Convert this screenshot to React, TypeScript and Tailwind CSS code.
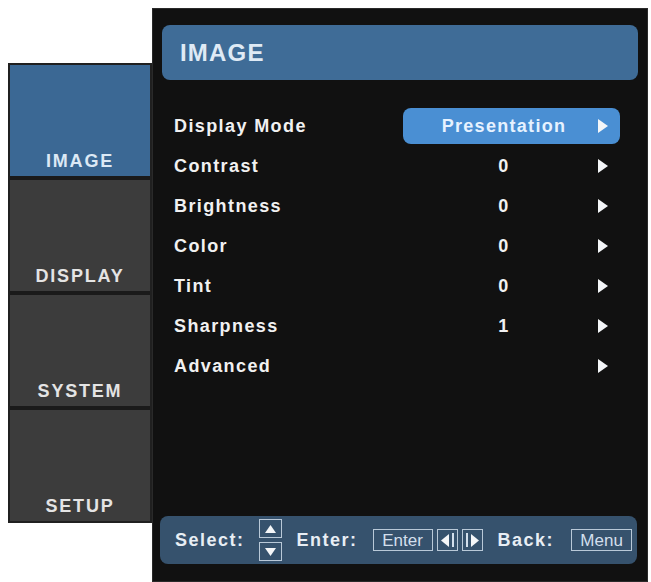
const rows = [
  { label: "Display Mode", value: "Presentation", active: true },
  { label: "Contrast", value: "0" },
  { label: "Brightness", value: "0" },
  { label: "Color", value: "0" },
  { label: "Tint", value: "0" },
  { label: "Sharpness", value: "1" },
  { label: "Advanced", value: "" },
];

const tabs = [
  { name: "IMAGE", active: true },
  { name: "DISPLAY" },
  { name: "SYSTEM" },
  { name: "SETUP" },
];

function Tri({ dir, w = 10, h = 14 }: { dir: "right" | "left" | "up" | "down"; w?: number; h?: number }) {
  const pts =
    dir === "right"
      ? `0,0 ${w},${h / 2} 0,${h}`
      : dir === "left"
      ? `${w},0 0,${h / 2} ${w},${h}`
      : dir === "up"
      ? `0,${h} ${w / 2},0 ${w},${h}`
      : `0,0 ${w / 2},${h} ${w},0`;
  return (
    <svg width={w} height={h} viewBox={`0 0 ${w} ${h}`} className="block">
      <polygon points={pts} fill="#f4f6f8" />
    </svg>
  );
}

function Key({ children, w }: { children: React.ReactNode; w: string }) {
  return (
    <div className={`${w} h-[22px] border-[1.5px] border-[#b9c9d8] flex items-center justify-center text-[17px] leading-none text-[#d3dfec]`}>
      {children}
    </div>
  );
}

export default function App() {
  return (
    <div
      className="w-[651px] h-[582px] bg-white flex items-start pl-[8px] overflow-hidden"
      style={{ fontFamily: '"Liberation Sans", Arial, sans-serif' }}
    >
      {/* left tabs */}
      <div className="mt-[63px] w-[144px] h-[460px] bg-[#1a1a1a] border-2 border-[#202020] flex flex-col gap-[4px]">
        {tabs.map((t) => (
          <div
            key={t.name}
            className={`flex-1 flex flex-col justify-end items-center pb-[5px] ${
              t.active ? "bg-[#3b6894] text-[#dce9f5]" : "bg-[#3c3c3c] text-[#e4e4e4]"
            }`}
          >
            <span className="text-[18px] font-bold tracking-[1.8px] leading-[20px]">{t.name}</span>
          </div>
        ))}
      </div>

      {/* main panel */}
      <div className="mt-[8px] w-[496px] h-[574px] bg-[#111111] border border-[#2a2a2a] flex flex-col">
        <div className="mx-[9px] mt-[16px] h-[55px] rounded-[8px] bg-[#3f6c97] flex items-center pl-[18px]">
          <span className="text-[24px] font-bold tracking-[1.2px] text-[#dfeaf5]">IMAGE</span>
        </div>

        <div className="mt-[26px] flex flex-col">
          {rows.map((r) => (
            <div key={r.label} className="h-[40px] flex items-center pl-[21px]">
              <span className="flex-1 text-[18px] font-bold tracking-[1.4px] text-[#f1f1f1]">{r.label}</span>
              <div
                className={`w-[217px] h-[36px] mr-[27px] flex items-center pl-[21px] ${
                  r.active ? "bg-[#4a8fd3] rounded-[8px]" : ""
                }`}
              >
                <span
                  className={`w-[160px] text-center text-[18px] font-bold tracking-[1.3px] ${
                    r.active ? "text-[#e6f2ff]" : "text-[#f1f1f1]"
                  }`}
                >
                  {r.value}
                </span>
                <span className="ml-[14px]">
                  <Tri dir="right" />
                </span>
              </div>
            </div>
          ))}
        </div>

        {/* footer */}
        <div className="mt-auto mb-[17px] ml-[7px] mr-[10px] h-[48px] rounded-[8px] bg-[#36526d] flex items-center pl-[15px] text-[18px] font-bold tracking-[1.5px] text-[#e8eef4]">
          <span>Select:</span>
          <div className="ml-[14px] flex flex-col gap-[4px]">
            <div className="w-[23px] h-[19px] border-[1.5px] border-[#b9c9d8] flex items-center justify-center">
              <Tri dir="up" w={11} h={8} />
            </div>
            <div className="w-[23px] h-[19px] border-[1.5px] border-[#b9c9d8] flex items-center justify-center">
              <Tri dir="down" w={11} h={8} />
            </div>
          </div>
          <span className="ml-[15px]">Enter:</span>
          <div className="ml-[15px] flex items-center gap-[4px] tracking-normal font-normal">
            <Key w="w-[60px]">Enter</Key>
            <Key w="w-[21px]">
              <div className="flex items-center gap-[3px]">
                <Tri dir="left" w={8} h={13} />
                <div className="w-[2px] h-[14px] bg-[#d3dfec]" />
              </div>
            </Key>
            <Key w="w-[21px]">
              <div className="flex items-center gap-[3px]">
                <div className="w-[2px] h-[14px] bg-[#d3dfec]" />
                <Tri dir="right" w={8} h={13} />
              </div>
            </Key>
          </div>
          <span className="ml-[15px]">Back:</span>
          <div className="ml-[17px] tracking-normal font-normal">
            <Key w="w-[61px]">Menu</Key>
          </div>
        </div>
      </div>
    </div>
  );
}
